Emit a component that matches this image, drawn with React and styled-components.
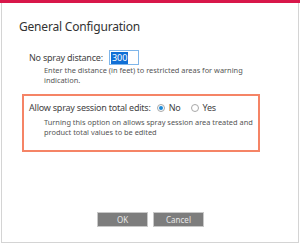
import React from "react";
import styled, { createGlobalStyle } from "styled-components";

const Global = createGlobalStyle`
  html, body { margin: 0; padding: 0; background: #fff; }
  body { font-family: "Noto Sans", "Open Sans", sans-serif; color: #444; }
  * { box-sizing: border-box; }
`;

const Page = styled.div`
  width: 300px;
  height: 244px;
  display: flex;
  flex-direction: column;
`;

const RedBar = styled.div`
  height: 3px;
  background: #d8174a;
`;

const Frame = styled.div`
  margin: 0 1px;
  width: 298px;
  height: 240px;
  border: 1px solid #d4d4d4;
  border-top: none;
  display: flex;
  flex-direction: column;
  padding: 0 0 0 17px;
`;

const Title = styled.h1`
  margin: 16px 0 0 0;
  font-size: 12px;
  letter-spacing: -0.2px;
  line-height: 16px;
  font-weight: 400;
  color: #333;
`;

const FieldRow = styled.div`
  display: flex;
  align-items: center;
  gap: 6px;
  margin: 15px 0 0 10px;
`;

const Label = styled.span`
  font-size: 9px;
  letter-spacing: -0.22px;
  line-height: 15px;
  color: #444;
`;

const NumberBox = styled.div`
  width: 30px;
  height: 15px;
  border: 1px solid #7fb6ea;
  display: flex;
  align-items: center;
  padding-left: 1px;
`;

const Selected = styled.span`
  background: #0f6fd6;
  color: #fff;
  font-size: 9px;
  line-height: 12px;
  padding: 0 1px;
`;

const Help = styled.p`
  margin: ${(p) => p.$top || 0}px 0 0 ${(p) => p.$left || 0}px;
  font-size: 7.4px;
  line-height: 9.5px;
  color: #555;
  width: ${(p) => p.$width}px;
`;

const Highlight = styled.div`
  margin: 9px 0 0 3px;
  width: 238px;
  height: 58px;
  border: 2px solid #f58466;
  padding: 4px 0 0 5px;
`;

const RadioRow = styled.div`
  display: flex;
  align-items: center;
`;

const RadioGroup = styled.div`
  display: flex;
  align-items: center;
  gap: 4px;
  margin-left: ${(p) => p.$gap}px;
`;

const Radio = styled.span`
  width: 8px;
  height: 8px;
  border-radius: 50%;
  border: 1px solid #a8a8a8;
  display: flex;
  align-items: center;
  justify-content: center;
  &::after {
    content: "";
    width: 4px;
    height: 4px;
    border-radius: 50%;
    background: ${(p) => (p.$on ? "#1b8ad8" : "transparent")};
  }
`;

const Buttons = styled.div`
  margin-top: auto;
  margin-bottom: 15px;
  margin-left: 78px;
  display: flex;
  gap: 5px;
`;

const Button = styled.button`
  width: 51px;
  height: 15px;
  padding: 0;
  background: #7d7d7d;
  border: 1px solid #c8c8c8;
  color: #e8e8e8;
  font-family: "Noto Sans", "Open Sans", sans-serif;
  font-size: 8px;
  line-height: 13px;
`;

export default function App() {
  return (
    <Page>
      <Global />
      <RedBar />
      <Frame>
        <Title>General Configuration</Title>
        <FieldRow>
          <Label>No spray distance:</Label>
          <NumberBox>
            <Selected>300</Selected>
          </NumberBox>
        </FieldRow>
        <Help $top={1} $left={25} $width={200}>
          Enter the distance (in feet) to restricted areas for warning indication.
        </Help>
        <Highlight>
          <RadioRow>
            <Label>Allow spray session total edits:</Label>
            <RadioGroup $gap={6}>
              <Radio $on />
              <Label>No</Label>
            </RadioGroup>
            <RadioGroup $gap={10}>
              <Radio />
              <Label>Yes</Label>
            </RadioGroup>
          </RadioRow>
          <Help $top={3} $left={15} $width={210}>
            Turning this option on allows spray session area treated and product total values to be edited
          </Help>
        </Highlight>
        <Buttons>
          <Button>OK</Button>
          <Button>Cancel</Button>
        </Buttons>
      </Frame>
    </Page>
  );
}
